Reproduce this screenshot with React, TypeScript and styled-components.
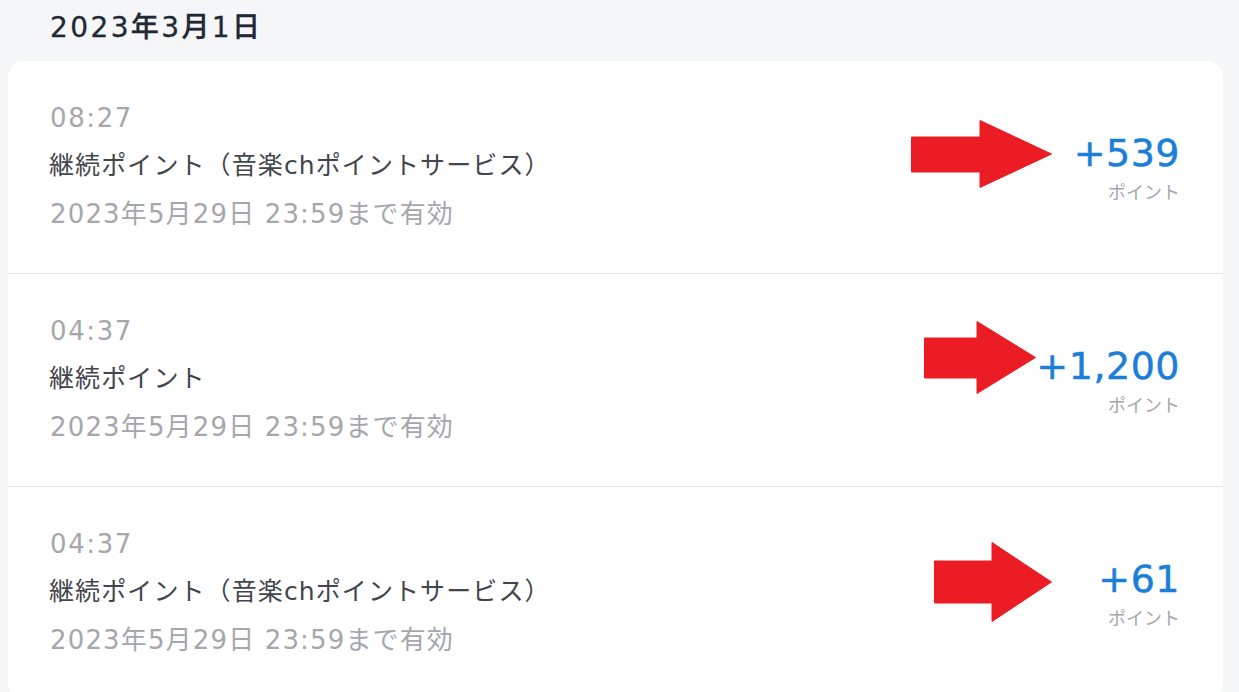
import * as React from 'react'
import styled, { createGlobalStyle } from 'styled-components'

const GlobalStyle = createGlobalStyle`
  html, body {
    margin: 0;
    padding: 0;
    background: #f5f6f8;
    font-family: "DejaVu Sans", "Noto Sans CJK JP", sans-serif;
  }
`

const Page = styled.div`
  width: 1239px;
  height: 692px;
  overflow: hidden;
  background: #f5f6f8;
`

const DateHeading = styled.h2`
  margin: 0;
  padding: 8px 0 0 50px;
  height: 61px;
  box-sizing: border-box;
  font-size: 28px;
  line-height: 40px;
  font-weight: 500;
  letter-spacing: 2.4px;
  color: #1f2933;
  -webkit-text-stroke: 0.3px #1f2933;
`

const Card = styled.div`
  margin: 0 16px 0 8px;
  background: #ffffff;
  border-radius: 16px;
  overflow: hidden;
`

const Row = styled.div`
  position: relative;
  display: flex;
  align-items: center;
  justify-content: space-between;
  height: 212px;
  padding: 0 43px 0 42px;
  box-sizing: border-box;
  & + & {
    border-top: 1px solid #e4e6ea;
    height: 213px;
  }
`

const Info = styled.div`
  display: flex;
  flex-direction: column;
  gap: 12px;
  margin-top: -3px;
`

const Time = styled.div`
  font-size: 26px;
  line-height: 36px;
  color: #a5a7ad;
  letter-spacing: 1.6px;
`

const Title = styled.div`
  font-size: 25px;
  line-height: 36px;
  color: #41454c;
  letter-spacing: 1.1px;
  margin-left: -1px;
`

const Expiry = styled.div`
  font-size: 26px;
  line-height: 36px;
  color: #a5a7ad;
  letter-spacing: 1.15px;
`

const Amount = styled.div`
  display: flex;
  flex-direction: column;
  align-items: flex-end;
  gap: 4px;
`

const Points = styled.div`
  font-size: 38px;
  line-height: 44px;
  color: #1b7fd8;
  letter-spacing: 0.5px;
  -webkit-text-stroke: 0.5px #1b7fd8;
`

const Unit = styled.div`
  font-family: "Noto Sans CJK JP", sans-serif;
  font-size: 18px;
  line-height: 24px;
  color: #a5a7ad;
`

const ArrowBox = styled.svg<{ $left: number; $top: number }>`
  position: absolute;
  left: ${p => p.$left}px;
  top: ${p => p.$top}px;
`

interface IArrow {
  left: number
  top: number
  width: number
  height: number
  shaft: number
  shaftTop: number
  shaftBottom: number
}

const Arrow = ({ left, top, width, height, shaft, shaftTop, shaftBottom }: IArrow) => (
  <ArrowBox $left={left} $top={top} width={width} height={height} viewBox={`0 0 ${width} ${height}`}>
    <polygon
      points={`0.5,${shaftTop} ${shaft},${shaftTop} ${shaft},0.5 ${width - 0.5},${height / 2} ${shaft},${height - 0.5} ${shaft},${shaftBottom} 0.5,${shaftBottom}`}
      fill="#ec1c24"
      stroke="#ec1c24"
      strokeWidth="1"
      strokeLinejoin="round"
    />
  </ArrowBox>
)

const entries = [
  {
    time: '08:27',
    title: '継続ポイント（音楽chポイントサービス）',
    points: '+539',
    arrow: { left: 903, top: 59, width: 141, height: 68, shaft: 69, shaftTop: 17, shaftBottom: 52 },
  },
  {
    time: '04:37',
    title: '継続ポイント',
    points: '+1,200',
    arrow: { left: 916, top: 47, width: 112, height: 73, shaft: 53, shaftTop: 17, shaftBottom: 57 },
  },
  {
    time: '04:37',
    title: '継続ポイント（音楽chポイントサービス）',
    points: '+61',
    arrow: { left: 926, top: 55, width: 118, height: 80, shaft: 58, shaftTop: 19, shaftBottom: 61 },
  },
]

export default function App() {
  return (
    <Page>
      <GlobalStyle />
      <DateHeading>2023年3月1日</DateHeading>
      <Card>
        {entries.map((e, i) => (
          <Row key={i}>
            <Info>
              <Time>{e.time}</Time>
              <Title>{e.title}</Title>
              <Expiry>2023年5月29日 23:59まで有効</Expiry>
            </Info>
            <Amount>
              <Points>{e.points}</Points>
              <Unit>ポイント</Unit>
            </Amount>
            <Arrow {...e.arrow} />
          </Row>
        ))}
      </Card>
    </Page>
  )
}
